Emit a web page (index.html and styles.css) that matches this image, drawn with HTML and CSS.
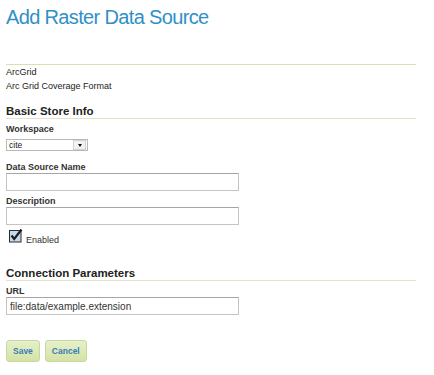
FILE: index.html
```html
<!DOCTYPE html>
<html>
  <head>
    <title>Add Raster Data Source</title>
    <link rel="stylesheet" href="styles.css">
  </head>
  <body>
    <div class="page">
      <h1 class="page-title">Add Raster Data Source</h1>

      <div class="store-type">
        <p>ArcGrid</p>
        <p>Arc Grid Coverage Format</p>
      </div>

      <form class="store-form">
        <div class="section">
          <h2 class="section-title">Basic Store Info</h2>

          <div class="field">
            <label>Workspace</label>
            <div class="select">
              <span class="select-value">cite</span>
              <span class="select-arrow"><span class="triangle"></span></span>
            </div>
          </div>

          <div class="field">
            <label>Data Source Name</label>
            <input class="text-input" type="text">
          </div>

          <div class="field">
            <label>Description</label>
            <input class="text-input" type="text">
          </div>

          <div class="field check-field">
            <svg class="checkbox" width="15" height="15" viewBox="0 0 15 15">
              <rect x="0.5" y="1.5" width="11.5" height="11.5" fill="#c3d9f0" stroke="#2b2b2b"></rect>
              <path d="M2.5 6.5 L5.2 10 L12.5 0.5" fill="none" stroke="#1c1c1c" stroke-width="2.2"></path>
            </svg>
            <span class="check-label">Enabled</span>
          </div>
        </div>

        <div class="section section-connection">
          <h2 class="section-title">Connection Parameters</h2>

          <div class="field">
            <label>URL</label>
            <input class="text-input" type="text" value="file:data/example.extension">
          </div>
        </div>

        <div class="buttons">
          <button type="button" class="button">Save</button>
          <button type="button" class="button">Cancel</button>
        </div>
      </form>
    </div>
  </body>
</html>
```

FILE: styles.css
```css
body {
  margin: 0;
  font-family: "Liberation Sans", Arial, sans-serif;
  color: #222;
  background: #fff;
}

.page {
  width: 410px;
  padding: 0 6px;
}

.page-title {
  margin: 5px 0 35px;
  font-size: 20px;
  line-height: 24px;
  font-weight: normal;
  letter-spacing: -0.65px;
  color: #2f90c8;
}

.store-type {
  border-top: 1px solid #d8e1b0;
  margin-bottom: 11px;
}

.store-type p {
  margin: 0;
  font-size: 9px;
  line-height: 14px;
}

.section-title {
  margin: 0;
  font-size: 11.5px;
  line-height: 14px;
  color: #222;
  border-bottom: 1px solid #e1e5c6;
}

.section-connection {
  margin-top: 20px;
}

.field {
  margin-top: 4px;
}

.field label {
  display: block;
  font-size: 9px;
  line-height: 12px;
  font-weight: bold;
  color: #333;
}

.select {
  display: flex;
  align-items: center;
  width: 80px;
  height: 10px;
  margin: 4px 0 10px;
  border: 1px solid #b9b9b9;
  background: #fff;
}

.select-value {
  flex: 1;
  padding-left: 2px;
  font-size: 8.5px;
  line-height: 10px;
  color: #222;
}

.select-arrow {
  display: flex;
  align-items: center;
  justify-content: center;
  width: 11px;
  height: 8px;
  margin-right: 1px;
  border: 1px solid #d0d0d0;
  background: #f2f2f2;
}

.triangle {
  width: 0;
  height: 0;
  border-left: 2.5px solid transparent;
  border-right: 2.5px solid transparent;
  border-top: 3px solid #111;
}

.text-input {
  display: block;
  box-sizing: border-box;
  width: 233px;
  height: 18px;
  margin: 0;
  padding: 0 3px;
  border: 1px solid #c4c4c4;
  border-top-color: #a6a6a6;
  font-family: "Liberation Sans", Arial, sans-serif;
  font-size: 10px;
  color: #333;
  background: #fff;
}

.check-field {
  display: flex;
  align-items: flex-start;
  padding-left: 3px;
}

.checkbox {
  display: block;
}

.check-label {
  margin-top: 6px;
  margin-left: 2px;
  font-size: 9px;
  line-height: 11px;
  color: #333;
}

.buttons {
  display: flex;
  gap: 5px;
  margin-top: 25px;
}

.button {
  height: 22px;
  padding: 0 6px;
  border: 1px solid #c8d89e;
  border-radius: 3px;
  background: linear-gradient(#e6f0cb, #d3e3a6);
  font-family: "Liberation Sans", Arial, sans-serif;
  font-size: 8.5px;
  font-weight: bold;
  color: #3a7cb6;
  cursor: pointer;
}
```
